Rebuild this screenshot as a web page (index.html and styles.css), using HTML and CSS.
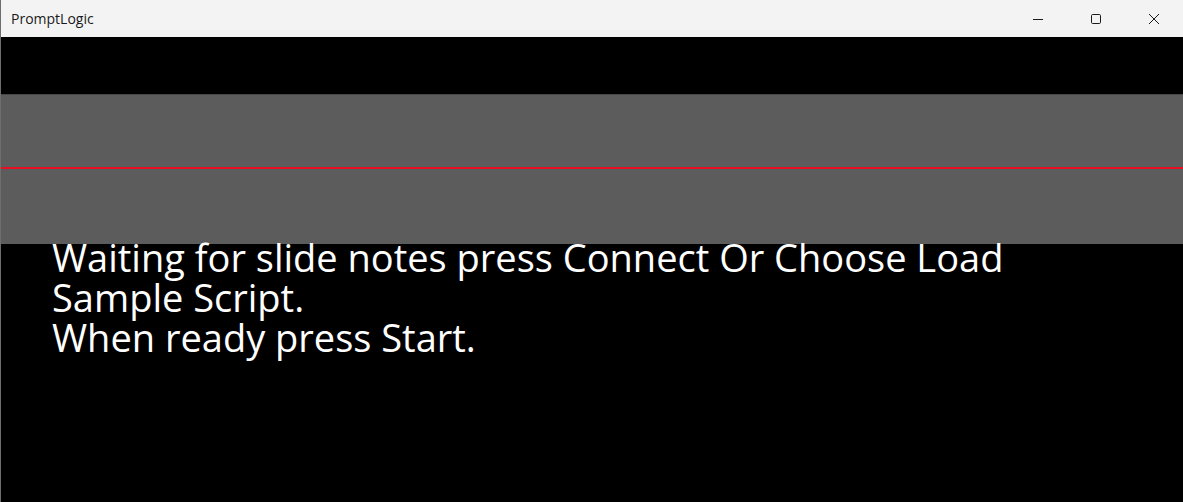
FILE: index.html
```html
<!DOCTYPE html>
<html>
<head>
<meta charset="utf-8">
<link rel="stylesheet" href="styles.css">
</head>
<body>
<div class="window">
  <div class="titlebar">
    <span class="title">PromptLogic</span>
    <div class="controls">
      <div class="ctl">
        <svg width="12" height="12" viewBox="0 0 12 12"><path d="M1 6.5h10" stroke="#1a1a1a" stroke-width="1" fill="none"/></svg>
      </div>
      <div class="ctl">
        <svg width="12" height="12" viewBox="0 0 12 12"><rect x="1.5" y="1.5" width="9" height="9" rx="1.2" stroke="#1a1a1a" stroke-width="1" fill="none"/></svg>
      </div>
      <div class="ctl">
        <svg width="12" height="12" viewBox="0 0 12 12"><path d="M1 1L11 11M11 1L1 11" stroke="#1a1a1a" stroke-width="1" fill="none"/></svg>
      </div>
    </div>
  </div>
  <div class="content">
    <div class="band">
      <div class="band-top"></div>
      <div class="redline"></div>
      <div class="band-bottom"></div>
    </div>
    <div class="message">Waiting for slide notes press Connect Or Choose Load Sample Script.<br>When ready press Start.</div>
  </div>
</div>
</body>
</html>
```
FILE: styles.css
```css
html, body {
  margin: 0;
  padding: 0;
  height: 100%;
  overflow: hidden;
}
body {
  font-family: "Open Sans", "Noto Sans", sans-serif;
  background: #000;
}
.window {
  height: 502px;
  display: flex;
  flex-direction: column;
  border-left: 1px solid #6e6e6e;
  box-sizing: border-box;
}
.titlebar {
  height: 37px;
  flex: none;
  background: #f3f3f3;
  display: flex;
  align-items: center;
  justify-content: space-between;
}
.title {
  font-size: 14px;
  color: #1a1a1a;
  padding-left: 10px;
  padding-bottom: 1px;
}
.controls {
  display: flex;
  height: 100%;
}
.ctl {
  width: 58px;
  height: 100%;
  display: flex;
  align-items: center;
  justify-content: center;
}
.content {
  flex: 1;
  background: #000;
  padding-top: 57px;
}
.band {
  height: 150px;
  background: #5c5c5c;
  display: flex;
  flex-direction: column;
  border-top: 1px solid #474747;
  box-sizing: border-box;
}
.band-top {
  height: 72px;
}
.redline {
  height: 2px;
  background: #e81123;
}
.message {
  position: relative;
  color: #fff;
  font-size: 38px;
  line-height: 40px;
  padding: 0 51px;
  margin-top: -7px;
  max-width: 1010px;
}
```
